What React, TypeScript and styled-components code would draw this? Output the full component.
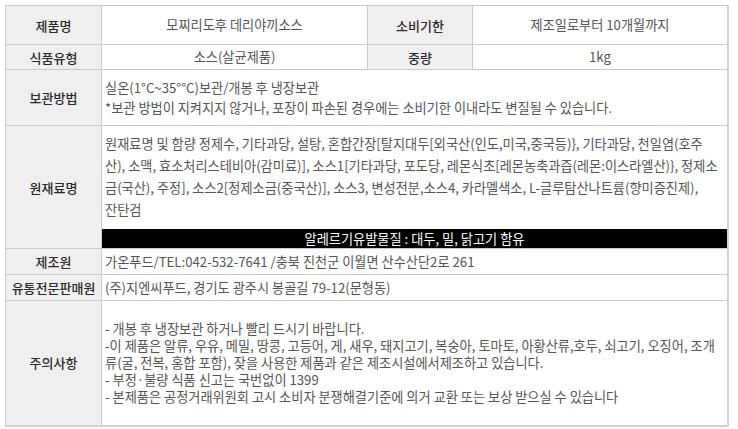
import styled, { createGlobalStyle } from 'styled-components'

const GlobalStyle = createGlobalStyle`
  html, body {
    margin: 0;
    padding: 0;
    background: #fff;
  }
  body {
    font-family: "Noto Sans CJK KR", "Noto Sans", sans-serif;
  }
`

const STORAGE = [
  '실온(1°C~35°°C)보관/개봉 후 냉장보관',
  '*보관 방법이 지켜지지 않거나, 포장이 파손된 경우에는 소비기한 이내라도 변질될 수 있습니다.'
]

const INGREDIENTS = [
  '원재료명 및 함량 정제수, 기타과당, 설탕, 혼합간장[탈지대두[외국산(인도,미국,중국등)}, 기타과당, 천일염(호주',
  '산), 소맥, 효소처리스테비아(감미료)], 소스1[기타과당, 포도당, 레몬식초[레몬농축과즙(레몬:이스라엘산)}, 정제소',
  '금(국산), 주정], 소스2[정제소금(중국산)], 소스3, 변성전분,소스4, 카라멜색소, L-글루탐산나트륨(향미증진제),',
  '잔탄검'
]

const CAUTIONS = [
  '- 개봉 후 냉장보관 하거나 빨리 드시기 바랍니다.',
  '-이 제품은 알류, 우유, 메밀, 땅콩, 고등어, 게, 새우, 돼지고기, 복숭아, 토마토, 아황산류,호두, 쇠고기, 오징어, 조개',
  '류(굴, 전복, 홍합 포함), 잦을 사용한 제품과 같은 제조시설에서제조하고 있습니다.',
  '- 부정·불량 식품 신고는 국번없이 1399',
  '- 본제품은 공정거래위원회 고시 소비자 분쟁해결기준에 의거 교환 또는 보상 받으실 수 있습니다'
]

export default function App () {
  return (
    <Page>
      <GlobalStyle />
      <InfoTable>
        <colgroup>
          <col style={{ width: 96 }} />
          <col style={{ width: 266 }} />
          <col style={{ width: 105 }} />
          <col />
        </colgroup>
        <tbody>
          <Row $h={39}>
            <Label>제품명</Label>
            <Value $center>모찌리도후 데리야끼소스</Value>
            <Label>소비기한</Label>
            <Value $center>제조일로부터 10개월까지</Value>
          </Row>
          <Row $h={25}>
            <Label>식품유형</Label>
            <Value $center>소스(살균제품)</Value>
            <Label>중량</Label>
            <Value $center>1kg</Value>
          </Row>
          <Row $h={56}>
            <Label>보관방법</Label>
            <Value colSpan={3} $lh={20}>
              {STORAGE.map(l => <Line key={l}>{l}</Line>)}
            </Value>
          </Row>
          <Row $h={122}>
            <Label>원재료명</Label>
            <Ingredients colSpan={3}>
              <IngredientText>
                {INGREDIENTS.map(l => <Line key={l}>{l}</Line>)}
              </IngredientText>
              <AllergyBar>알레르기유발물질 : 대두, 밀, 닭고기 함유</AllergyBar>
            </Ingredients>
          </Row>
          <Row $h={26}>
            <Label>제조원</Label>
            <Value colSpan={3}>가온푸드/TEL:042-532-7641 /충북 진천군 이월면 산수산단2로 261</Value>
          </Row>
          <Row $h={26}>
            <Label>유통전문판매원</Label>
            <Value colSpan={3}>(주)지엔씨푸드, 경기도 광주시 봉골길 79-12(문형동)</Value>
          </Row>
          <Row $h={125}>
            <Label>주의사항</Label>
            <Value colSpan={3} $lh={17}>
              {CAUTIONS.map(l => <Line key={l}>{l}</Line>)}
            </Value>
          </Row>
        </tbody>
      </InfoTable>
    </Page>
  )
}

const Page = styled.main`
  padding: 5px 0 0 5px;
`

const InfoTable = styled.table`
  width: 724px;
  border-collapse: collapse;
  table-layout: fixed;
  border-right: 2px solid #d2d2d2;
  border-bottom: 2px solid #d2d2d2;
`

const Row = styled.tr<{ $h: number }>`
  height: ${p => p.$h}px;
`

const Label = styled.th`
  background: #efefef;
  border: 1px solid #cbcbcb;
  color: #2a2a2a;
  font-size: 13px;
  font-weight: 500;
  text-align: center;
  vertical-align: middle;
  padding: 0;
  white-space: nowrap;
`

const Value = styled.td<{ $center?: boolean; $lh?: number }>`
  border: 1px solid #cbcbcb;
  color: #555;
  font-size: 13.2px;
  line-height: ${p => (p.$lh ? `${p.$lh}px` : '18px')};
  text-align: ${p => (p.$center ? 'center' : 'left')};
  vertical-align: middle;
  padding: 0 3px;
  white-space: nowrap;
`

const Line = styled.span`
  display: block;
  white-space: nowrap;
`

const Ingredients = styled.td`
  border: 1px solid #cbcbcb;
  padding: 0;
  vertical-align: top;
`

const IngredientText = styled.div`
  padding: 7px 3px 8px;
  color: #555;
  font-size: 13.2px;
  line-height: 22px;
  height: 88px;
`

const AllergyBar = styled.div`
  background: #000;
  color: #fff;
  font-size: 13.2px;
  line-height: 19px;
  height: 19px;
  text-align: center;
`
